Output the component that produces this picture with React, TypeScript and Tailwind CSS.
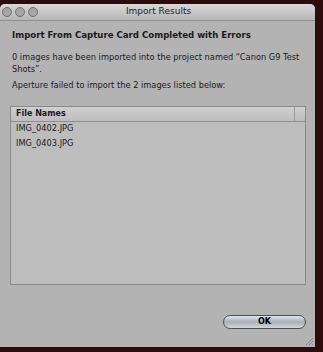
const font = { fontFamily: '"DejaVu Sans", "Liberation Sans", sans-serif' };

function TrafficLight() {
  return <div className="h-[10px] w-[10px] rounded-full border border-[#6f6f6f] bg-[#a6a6a6]" />;
}

export default function App() {
  return (
    <div className="h-[352px] w-[323px] overflow-hidden bg-[#2e0c0c] pt-[4px]" style={font}>
      <div className="flex h-[343px] w-[315px] flex-col overflow-hidden rounded-t-[5px] bg-[#b3b3b3]">
        {/* title bar */}
        <div className="relative flex h-[17px] items-center border-b border-[#8f8f8f] bg-gradient-to-b from-[#d8d8d8] to-[#b6b6b6]">
          <div className="absolute left-[2px] top-[3px] flex gap-[3px]">
            <TrafficLight />
            <TrafficLight />
            <TrafficLight />
          </div>
          <div className="w-full pl-[2px] text-center text-[9px] text-[#1f1f1f]">Import Results</div>
        </div>

        <div className="flex flex-1 flex-col pl-[10px] pr-[9px] pt-[8px] text-[#1a1a1a]">
          <div className="pl-[2px] text-[8.6px] font-bold">Import From Capture Card Completed with Errors</div>
          <div className="mt-[9px] pl-[2px] text-[8.25px] leading-[12px]">
            0 images have been imported into the project named “Canon G9 Test Shots”.
          </div>
          <div className="mt-[4px] pl-[2px] text-[8.25px] leading-[12px]">
            Aperture failed to import the 2 images listed below:
          </div>

          <div className="mt-[15px] flex h-[179px] flex-col border border-[#8a8a8a] bg-[#bdbdbd]">
            <div className="flex h-[15px] border-b border-[#8f8f8f] bg-gradient-to-b from-[#d0d0d0] to-[#bdbdbd] text-[8px] font-bold">
              <div className="flex flex-1 items-center pl-[5px]">File Names</div>
              <div className="w-[11px] border-l border-[#9a9a9a]" />
            </div>
            <div className="-mt-[1px] pl-[5px] text-[8.25px] leading-[15.5px]">
              <div>IMG_0402.JPG</div>
              <div>IMG_0403.JPG</div>
            </div>
          </div>

          <div className="mt-[30px] flex justify-end">
            <button className="flex h-[14px] w-[83px] items-center justify-center rounded-full border border-[#4a4f57] bg-gradient-to-b from-[#e4e7ec] via-[#a9afb8] to-[#d2d6dc] text-[8px] font-bold text-black">
              OK
            </button>
          </div>
        </div>
        <div className="flex justify-end pb-[1px] pr-[1px]">
          <svg width="9" height="9" viewBox="0 0 9 9">
            <path d="M8 1L1 8M8 4L4 8M8 7L7 8" stroke="#8a8a8a" strokeWidth="1" />
          </svg>
        </div>
      </div>
    </div>
  );
}
